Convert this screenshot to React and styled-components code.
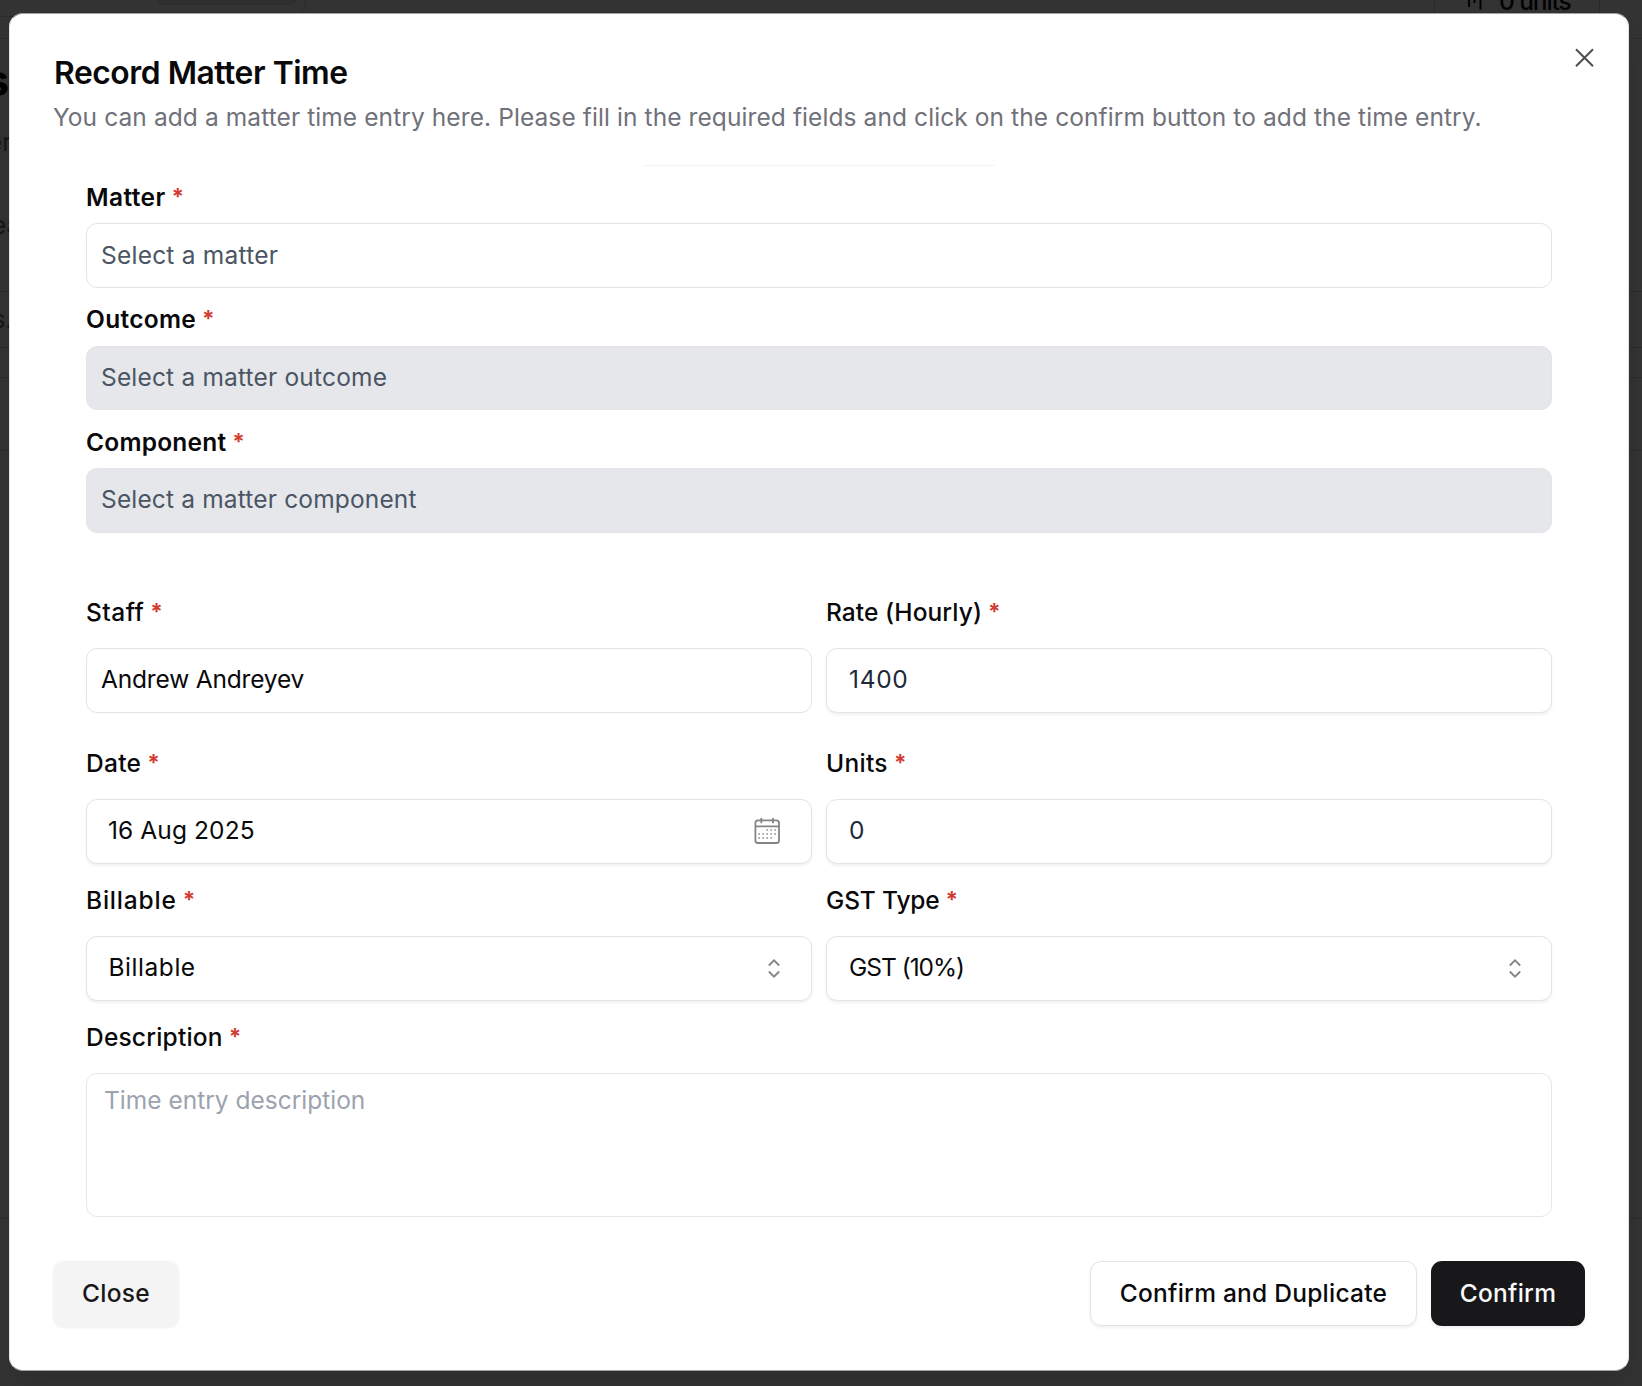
import React from 'react';
import styled, { createGlobalStyle } from 'styled-components';

const GlobalStyle = createGlobalStyle`
  *, *::before, *::after { box-sizing: border-box; }
  html, body, #root { height: 100%; }
  body {
    margin: 0;
    overflow: hidden;
    background: #333333;
    color: #09090b;
    font-family: Inter, "Liberation Sans", sans-serif;
    font-size: 24.5px;
    line-height: 36px;
  }
  button { font: inherit; }
`;

const Screen = styled.div`
  position: relative;
  width: 1642px;
  height: 1386px;
  overflow: hidden;
  background: #333333;
`;

const Backdrop = styled.div`
  position: absolute;
  inset: 0;
`;

const BackRule = styled.div`
  position: absolute;
  left: 0;
  right: 0;
  top: ${(p) => p.$y}px;
  height: 1px;
  background: #2c2c2c;
`;

const BackBox = styled.div`
  position: absolute;
  left: ${(p) => p.$x}px;
  top: ${(p) => p.$y}px;
  width: ${(p) => p.$w}px;
  height: ${(p) => p.$h}px;
  border: 1px solid #2b2b2b;
  border-radius: ${(p) => p.$r}px;
  background: ${(p) => p.$bg || 'transparent'};
`;

const BackText = styled.div`
  position: absolute;
  left: ${(p) => p.$x}px;
  top: ${(p) => p.$y}px;
  font-size: ${(p) => p.$size || 24.5}px;
  font-weight: ${(p) => p.$weight || 400};
  letter-spacing: ${(p) => p.$track || 0}px;
  color: ${(p) => p.$color || '#161618'};
  white-space: nowrap;
`;

const BackIcon = styled.svg`
  position: absolute;
  left: 1460px;
  top: -16px;
`;

const Dialog = styled.section`
  position: absolute;
  left: 9px;
  top: 13px;
  width: 1620px;
  height: 1358px;
  padding: 38.5px 43px 44px;
  display: flex;
  flex-direction: column;
  background: #ffffff;
  border: 1px solid #e4e4e7;
  border-top-color: #a3a3a3;
  border-bottom-color: #a3a3a3;
  border-radius: 14px;
  box-shadow: 0 18px 28px -5px rgba(0, 0, 0, 0.12);
`;

const DialogClose = styled.button`
  position: absolute;
  top: 30px;
  right: 30px;
  width: 27px;
  height: 27px;
  padding: 0;
  border: 0;
  background: none;
  svg { display: block; }
`;

const Title = styled.h2`
  margin: 0;
  padding-left: 1px;
  font-size: 31.8px;
  line-height: 40px;
  font-weight: 600;
  letter-spacing: -0.45px;
`;

const Lead = styled.p`
  margin: 6px 0 0;
  color: #71717a;
  white-space: nowrap;
  letter-spacing: 0.09px;
`;

const Divider = styled.div`
  align-self: center;
  width: 352px;
  height: 1px;
  margin-top: 30.5px;
  background: #f4f4f5;
`;

const Form = styled.form`
  display: flex;
  flex-direction: column;
  width: 1466px;
  margin: 13px 0 0 33px;
`;

const Row = styled.div`
  display: grid;
  grid-template-columns: ${(p) => (p.$single ? '1fr' : '1fr 1fr')};
  column-gap: 14px;
  margin-top: ${(p) => p.$top || 0}px;
`;

const Field = styled.div`
  display: flex;
  flex-direction: column;
  gap: ${(p) => p.$gap}px;
`;

const Label = styled.label`
  height: 36px;
  font-weight: ${(p) => p.$weight || 500};
  letter-spacing: ${(p) => p.$track || 0}px;
  white-space: nowrap;
`;

const Star = styled.span`
  margin-left: 6px;
  color: #d03a2f;
  font-size: 22.5px;
  font-weight: 700;
  line-height: 1;
  letter-spacing: 0;
  vertical-align: 1px;
`;

const Control = styled.div`
  height: 64.5px;
  padding: ${(p) => p.$pad || '0 27px 2px 22px'};
  display: flex;
  align-items: center;
  justify-content: space-between;
  border: 1px solid #e4e4e7;
  border-radius: 11px;
  background: ${(p) => (p.$disabled ? '#e5e7eb' : '#ffffff')};
  color: ${(p) => p.$color || '#09090b'};
  letter-spacing: ${(p) => p.$track || 0}px;
  box-shadow: ${(p) => (p.$raised ? '0 2px 3px rgba(0, 0, 0, 0.06)' : 'none')};

  svg { margin-top: 2px; }
`;

const TextArea = styled.div`
  height: 143.5px;
  padding: 8px 17px;
  border: 1px solid #e5e7eb;
  border-radius: 11px;
  color: #9ca3af;
`;

const Footer = styled.footer`
  display: flex;
  gap: 14px;
  margin-top: auto;
`;

const Button = styled.button`
  height: 65px;
  width: ${(p) => p.$w}px;
  padding: 0 0 1px;
  margin-right: ${(p) => (p.$push ? 'auto' : 0)};
  border: ${(p) => (p.$outline ? '1px solid #e4e4e7' : '0')};
  border-radius: 11px;
  background: ${(p) => p.$bg || '#ffffff'};
  color: ${(p) => p.$color || '#09090b'};
  font-weight: 500;
  letter-spacing: 0.25px;
  white-space: nowrap;
  box-shadow: 0 2px 3px rgba(0, 0, 0, 0.06);
`;

const CloseIcon = () => (
  <svg width="27" height="27" viewBox="0 0 27 27" fill="none" stroke="#4f4f51" strokeWidth="2">
    <path d="M5 5.3l17 17M22 5.3L5 22.3" />
  </svg>
);

const SelectIcon = () => (
  <svg width="18" height="27" viewBox="0 0 18 27" fill="none" stroke="#858587" strokeWidth="1.8">
    <path d="M3.8 10.5L9 5.3l5.2 5.2M3.8 16.5L9 21.7l5.2-5.2" />
  </svg>
);

const dots = [
  [16, 14], [20, 14], [24, 14],
  [8, 18], [12, 18], [16, 18], [20, 18], [24, 18],
  [8, 22], [12, 22], [16, 22], [20, 22],
];

const CalendarIcon = () => (
  <svg width="30" height="30" viewBox="0 0 30 30" fill="none" stroke="#858587" strokeWidth="1.8">
    <rect x="3.4" y="4.4" width="23.6" height="22.6" rx="2.6" />
    <path d="M3.4 10.4H27M9.3 2v5.3M21 2v5.3" />
    {dots.map(([x, y]) => (
      <rect key={`${x}-${y}`} x={x - 1.6} y={y - 0.8} width="1.5" height="1.5" fill="#858587" stroke="none" />
    ))}
  </svg>
);

function LabelledField({ label, weight, track, gap, children }) {
  return (
    <Field $gap={gap}>
      <Label $weight={weight} $track={track}>
        {label}
        <Star>*</Star>
      </Label>
      {children}
    </Field>
  );
}

export default function App() {
  return (
    <Screen>
      <GlobalStyle />
      <Backdrop>
        <BackRule $y={38} />
        <BackRule $y={291} />
        <BackRule $y={347} />
        <BackRule $y={377} />
        <BackRule $y={450} />
        <BackRule $y={1218} />
        <BackBox $x={-20} $y={-60} $w={326} $h={77} $r={14} />
        <BackBox $x={156} $y={-50} $w={142} $h={55} $r={9} $bg="#2f2f2f" />
        <BackBox $x={1434} $y={-40} $w={166} $h={90} $r={11} />
        <BackText $x={1499} $y={-17} $weight={500} $track={-1.1} $color="#020202">0 units</BackText>
        <BackText $x={-15} $y={62} $size={43} $weight={700} $color="#020202">s</BackText>
        <BackText $x={-12} $y={124}>er</BackText>
        <BackText $x={-8} $y={207}>ea</BackText>
        <BackText $x={-7.5} $y={301}>s.</BackText>
        <BackIcon width="24" height="28" viewBox="0 0 24 28" fill="none" stroke="#020202" strokeWidth="2">
          <path d="M9 10v13M14.5 10v9M20.5 10v15.5" />
        </BackIcon>
      </Backdrop>
      <Dialog>
        <DialogClose aria-label="Close dialog"><CloseIcon /></DialogClose>
        <Title>Record Matter Time</Title>
        <Lead>
          You can add a matter time entry here. Please fill in the required fields and click on the confirm button to
          add the time entry.
        </Lead>
        <Divider />
        <Form>
          <Row $single>
            <LabelledField label="Matter" weight={600} track={0.4} gap={8}>
              <Control $pad="0 14px" $track={0.23} $color="#4b5563">Select a matter</Control>
            </LabelledField>
          </Row>
          <Row $single $top={13.5}>
            <LabelledField label="Outcome" weight={600} track={0.3} gap={8.5}>
              <Control $pad="0 14px 2px" $track={0.18} $color="#4b5563" $disabled>Select a matter outcome</Control>
            </LabelledField>
          </Row>
          <Row $single $top={14}>
            <LabelledField label="Component" weight={600} track={0.22} gap={8}>
              <Control $pad="0 14px 2px" $track={0.16} $color="#4b5563" $disabled>Select a matter component</Control>
            </LabelledField>
          </Row>
          <Row $top={61.5}>
            <LabelledField label="Staff" track={0.5} gap={18}>
              <Control $pad="0 14px 2px" $track={-0.18}>Andrew Andreyev</Control>
            </LabelledField>
            <LabelledField label="Rate (Hourly)" track={0.08} gap={18}>
              <Control $raised $track={0.7} $color="#1e293b">1400</Control>
            </LabelledField>
          </Row>
          <Row $top={32.5}>
            <LabelledField label="Date" track={0.3} gap={18}>
              <Control $raised $pad="0 29px 2px 21px" $track={0.1}>16 Aug 2025<CalendarIcon /></Control>
            </LabelledField>
            <LabelledField label="Units" track={0.3} gap={18}>
              <Control $raised $color="#1e293b">0</Control>
            </LabelledField>
          </Row>
          <Row $top={18.5}>
            <LabelledField label="Billable" track={0.8} gap={18}>
              <Control $raised $track={0.55} $pad="0 28px 2px 21.5px">Billable<SelectIcon /></Control>
            </LabelledField>
            <LabelledField label="GST Type" track={-0.15} gap={18}>
              <Control $raised $track={-1}>GST (10%)<SelectIcon /></Control>
            </LabelledField>
          </Row>
          <Row $single $top={18.5}>
            <LabelledField label="Description" track={0.2} gap={18}>
              <TextArea>Time entry description</TextArea>
            </LabelledField>
          </Row>
        </Form>
        <Footer>
          <Button $w={126} $bg="#f4f4f5" $color="#18181b" $push>Close</Button>
          <Button $w={327} $outline>Confirm and Duplicate</Button>
          <Button $w={154} $bg="#18181b" $color="#fafafa">Confirm</Button>
        </Footer>
      </Dialog>
    </Screen>
  );
}
